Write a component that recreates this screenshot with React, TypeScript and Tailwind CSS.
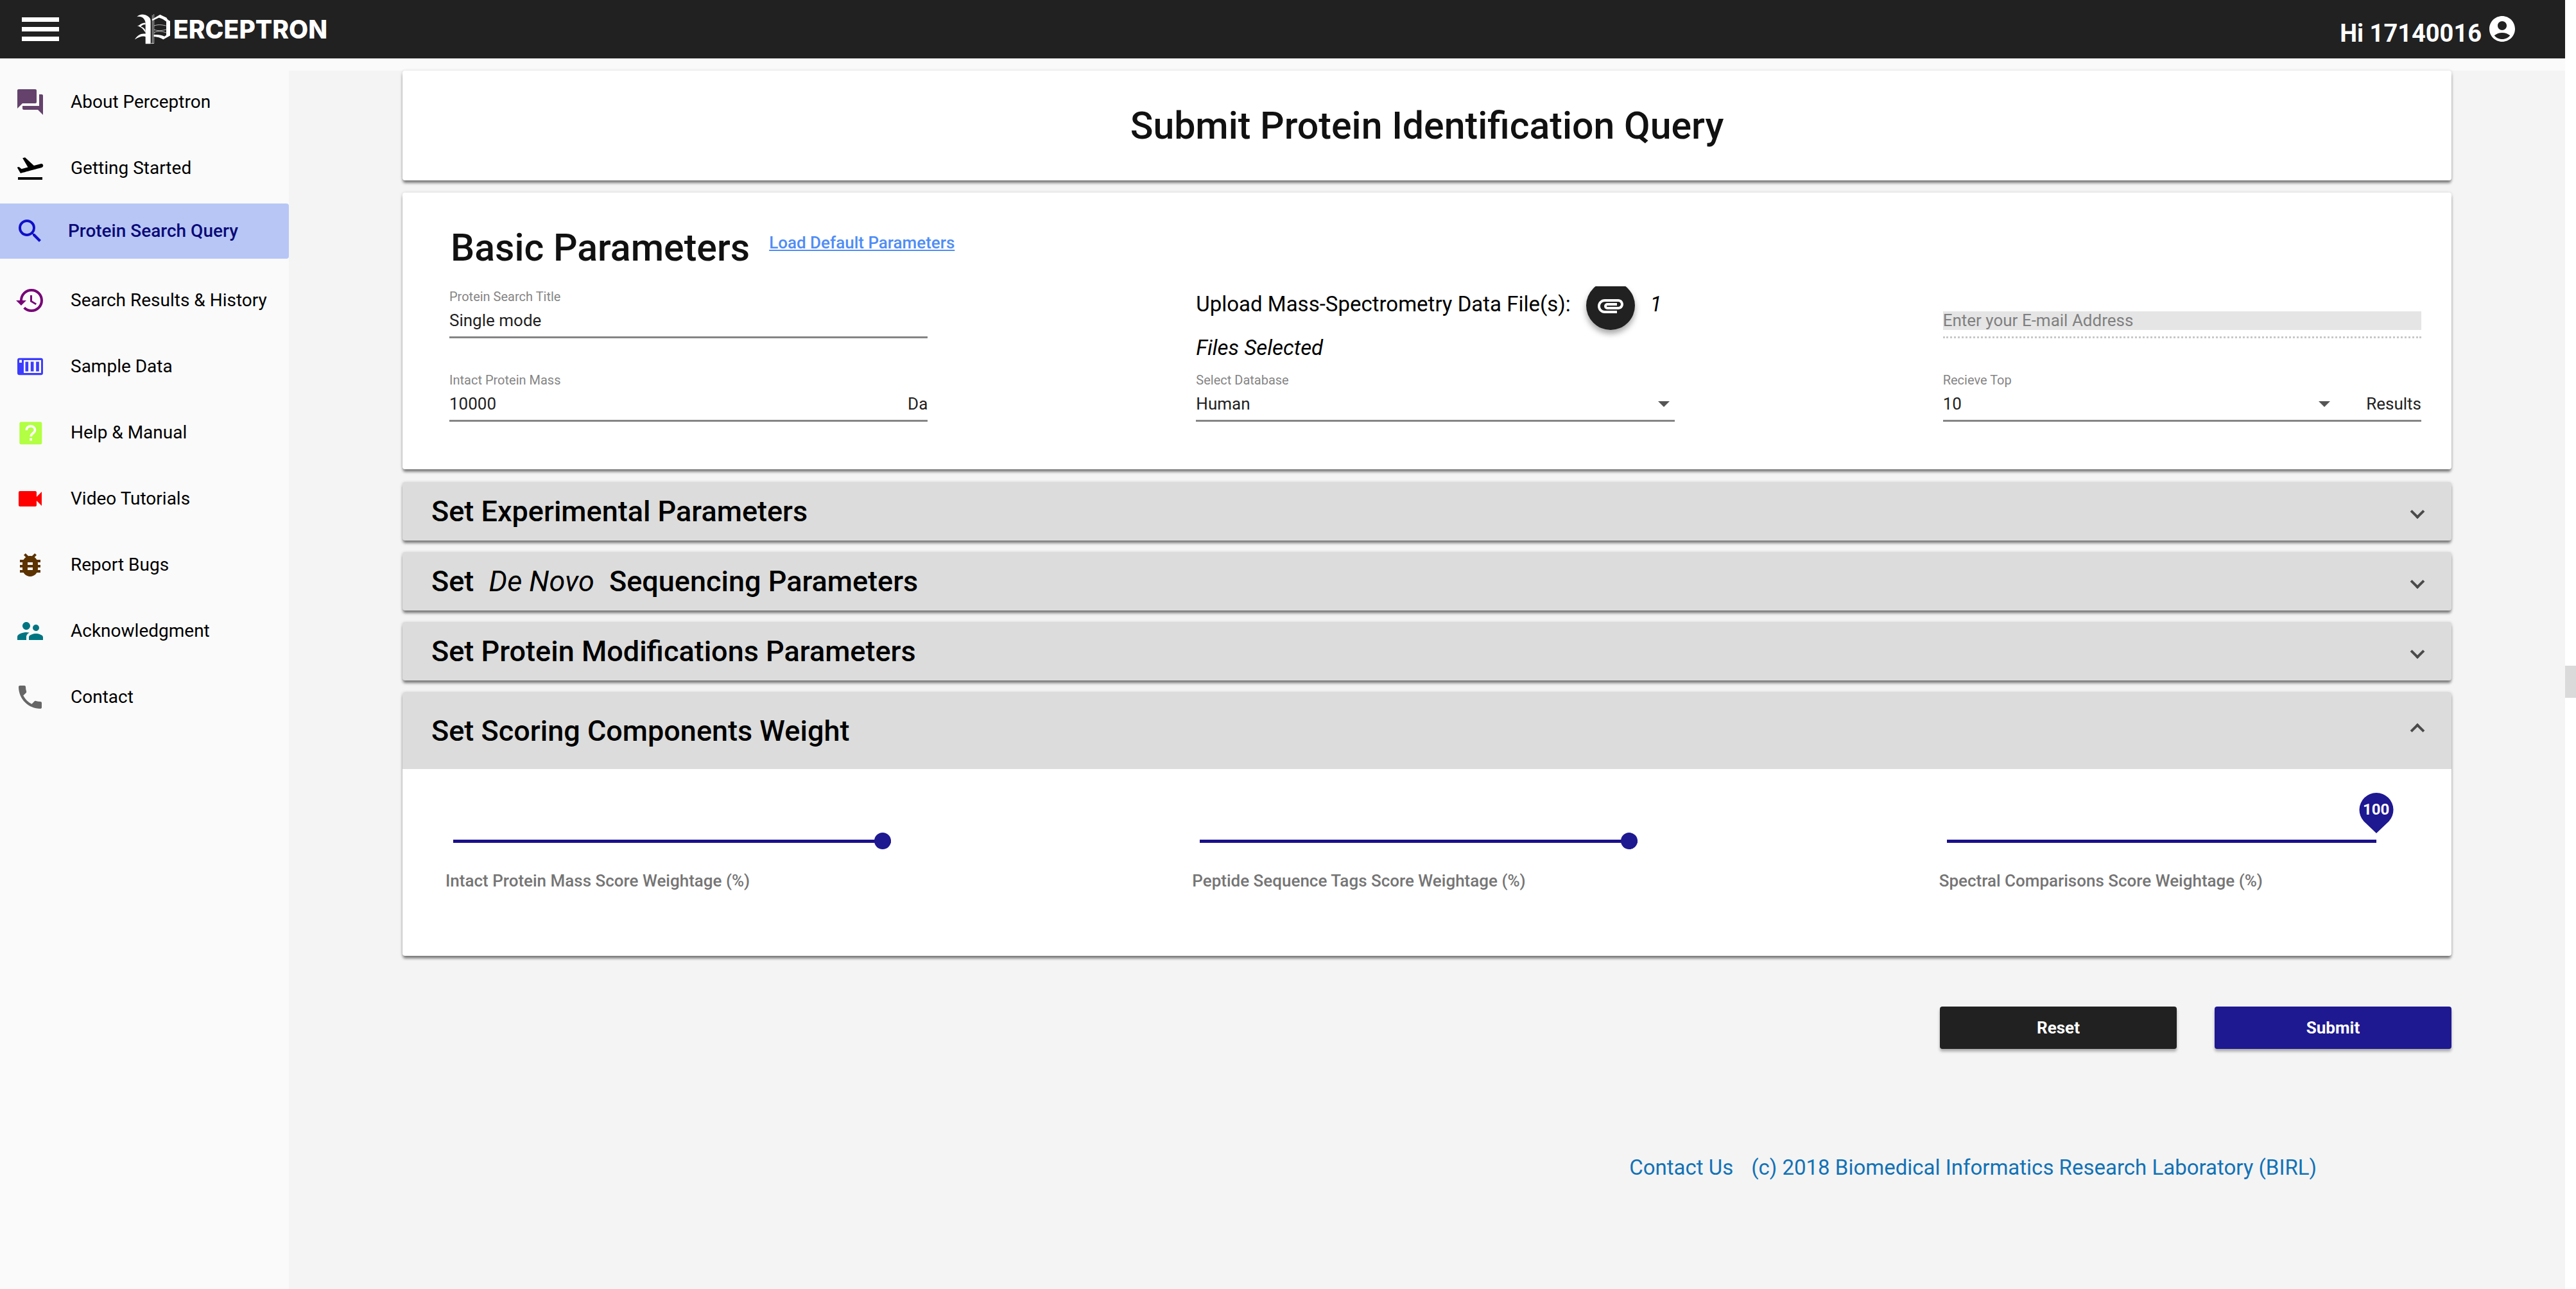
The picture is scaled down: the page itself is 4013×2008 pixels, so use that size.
import React from "react";
import {
  MdForum,
  MdFlightTakeoff,
  MdSearch,
  MdHistory,
  MdVideocam,
  MdBugReport,
  MdSupervisorAccount,
  MdPhone,
  MdAccountCircle,
  MdAttachment,
} from "react-icons/md";

function SampleDataIcon({ className }: { className?: string }) {
  return (
    <svg viewBox="0 0 24 24" className={className} fill="currentColor" aria-hidden="true">
      <path
        fillRule="evenodd"
        d="M2 4h20a2 2 0 0 1 2 2v12a2 2 0 0 1-2 2H2a2 2 0 0 1-2-2V6a2 2 0 0 1 2-2zM1.800 5.800v2.600h2.400V5.800zM6 6v12h16.200V6z"
      />
      <path d="M7.500 7.500h2.800v9H7.500zM12.500 7.500h2.800v9h-2.800zM17.500 7.500h2.800v9h-2.800z" />
    </svg>
  );
}

function HelpIcon({ className }: { className?: string }) {
  return (
    <svg viewBox="0 0 24 24" className={className} aria-hidden="true">
      <rect x="2" y="2" width="21" height="21" rx="1.500" fill="currentColor" />
      <path
        d="M8.500 9.800c0-2.400 1.700-3.900 4-3.900s4 1.500 4 3.700c0 2.800-3.800 3-3.800 6"
        fill="none"
        stroke="#fff"
        strokeWidth="2.200"
      />
      <rect x="11.500" y="17.200" width="2.300" height="2.300" fill="#fff" />
    </svg>
  );
}

type NavItem = { label: string; icon: React.ReactNode; active?: boolean };

const NAV: NavItem[] = [
  { label: "About Perceptron", icon: <MdForum className="size-12 text-[#64426c]" /> },
  { label: "Getting Started", icon: <MdFlightTakeoff className="size-12 text-black" /> },
  { label: "Protein Search Query", icon: <MdSearch className="size-12 text-[#1010c8]" />, active: true },
  { label: "Search Results & History", icon: <MdHistory className="size-12 text-[#760076]" /> },
  { label: "Sample Data", icon: <SampleDataIcon className="size-10 text-[#3c3cff]" /> },
  { label: "Help & Manual", icon: <HelpIcon className="size-10 text-[#b2ff43]" /> },
  { label: "Video Tutorials", icon: <MdVideocam className="size-12 text-[#ff0000]" /> },
  { label: "Report Bugs", icon: <MdBugReport className="size-12 text-[#5c3200]" /> },
  { label: "Acknowledgment", icon: <MdSupervisorAccount className="size-12 text-[#007582]" /> },
  { label: "Contact", icon: <MdPhone className="size-12 text-[#666666]" /> },
];

function Logo() {
  return (
    <a href="#" aria-label="Perceptron" className="flex items-center text-white">
      <svg viewBox="0 0 180 140" className="h-[47px] w-[60px]" fill="currentColor" aria-hidden="true">
        <path d="M10 12C22-2 46-2 62 10c8 5 12 12 12 22v106H50V40C48 20 30 6 10 12z" />
        <path d="M10 54c12 2 16-14 40-14v8c-16 0-18 6-22 10 10 2 18 8 22 18v10C40 70 30 58 10 54z" />
        <path d="M0 118c14-22 30-30 52-26v14c-10-6-28-4-52 12z" />
        <path d="M80 24 118 2l30 14c4 8 8 12 17 16v68l-32 18c-12-8-28-12-46-14l2-8c18-2 36 0 50 8l8-6V34c-12-10-24-14-34-18L82 30z" />
        <path
          d="M82 4v134M89 0v136M74 136h16M90 54c14-6 34-6 56 0M90 72c14 6 34 6 56 0M90 86c14-8 34-8 56 0"
          fill="none"
          stroke="currentColor"
          strokeWidth="3"
          opacity="0.7"
        />
      </svg>
      <span className="font-[Inter] text-[39px] leading-none font-extrabold">ERCEPTRON</span>
    </a>
  );
}

const card =
  "rounded-[4px] bg-white shadow-[0_5px_4px_-1px_rgba(0,0,0,0.45),0_1px_5px_rgba(0,0,0,0.2)]";

function Caret() {
  return (
    <svg viewBox="0 0 18 9" className="pointer-events-none h-[9px] w-[18px] fill-[#555]" aria-hidden="true">
      <path d="M0 0h18l-9 9z" />
    </svg>
  );
}

function Field({
  id,
  label,
  line = "border-b-[3px] border-[#858585]",
  children,
}: {
  id: string;
  label: string;
  line?: string;
  children: React.ReactNode;
}) {
  return (
    <div className={"flex flex-col " + line}>
      <label htmlFor={id} className="h-7 pt-1 text-xl leading-6 text-[#858585]">
        {label}
      </label>
      <div className="my-2 flex h-[34px] items-center text-[26px] text-[#222]">{children}</div>
    </div>
  );
}

function Panel({ children }: { children: React.ReactNode }) {
  return (
    <button
      type="button"
      aria-expanded="false"
      className="flex h-[91px] w-full items-center justify-between rounded-[4px] bg-[#dcdcdc] px-[45px] text-left shadow-[0_5px_4px_-1px_rgba(0,0,0,0.45),0_1px_5px_rgba(0,0,0,0.2)]"
    >
      <h3 className="text-[45px] leading-none font-medium text-black">{children}</h3>
      <span className="size-4 rotate-45 border-r-4 border-b-4 border-[#4a4a4a]" />
    </button>
  );
}

function WeightSlider({ id, label, pin }: { id: string; label: string; pin?: boolean }) {
  return (
    <div className="flex flex-col">
      <div className="relative ml-3 h-7 w-[682px]">
        <input
          id={id}
          type="range"
          min={0}
          max={100}
          defaultValue={100}
          className={
            pin
              ? "absolute inset-0 h-7 w-[669px] appearance-none bg-[linear-gradient(#1a0f8a,#1a0f8a)] bg-[length:100%_5px] bg-center bg-no-repeat [&::-webkit-slider-thumb]:size-0 [&::-webkit-slider-thumb]:appearance-none"
              : "absolute inset-0 h-7 w-full appearance-none bg-[linear-gradient(#1a0f8a,#1a0f8a)] bg-[length:100%_5px] bg-center bg-no-repeat [&::-webkit-slider-thumb]:size-[26px] [&::-webkit-slider-thumb]:appearance-none [&::-webkit-slider-thumb]:rounded-full [&::-webkit-slider-thumb]:bg-[#1e1891]"
          }
        />
        {pin && (
          <output htmlFor={id} className="absolute right-[-14px] bottom-[26px] flex h-[63px] w-[54px] justify-center">
            <svg viewBox="0 0 54 63" className="absolute inset-0 fill-[#1e1891]" aria-hidden="true">
              <path d="M27 63 7.500 44.500A26.500 26.500 0 1 1 46.500 44.500z" />
            </svg>
            <span className="relative mt-3 text-2xl leading-7 font-bold text-white">100</span>
          </output>
        )}
      </div>
      <label htmlFor={id} className="mt-8 text-[26px] leading-8 font-medium text-[#757575]">
        {label}
      </label>
    </div>
  );
}

export default function App() {
  return (
    <div className="flex min-h-screen bg-[#fafafa] font-[Roboto,sans-serif] text-black">
      <div className="flex min-w-0 flex-1 flex-col">
        <header className="flex h-[91px] items-center justify-between bg-[#212121] pr-[74px] pl-[34px]">
          <div className="flex items-center gap-[118px]">
            <button type="button" aria-label="Toggle menu" className="flex w-[58px] flex-col gap-2">
              <span className="h-[7px] bg-white" />
              <span className="h-[7px] bg-white" />
              <span className="h-[7px] bg-white" />
            </button>
            <Logo />
          </div>
          <a href="#" className="flex items-start gap-2 text-white">
            <span className="pt-3 text-[38px] leading-none font-bold">Hi 17140016</span>
            <MdAccountCircle className="size-12" />
          </a>
        </header>

        <div className="flex flex-1">
          <nav className="w-[450px] shrink-0 pt-4">
            <ul>
              {NAV.map((item) => (
                <li key={item.label} className={item.active ? "h-[103px] pt-1" : "flex h-[103px] items-center"}>
                  <a
                    href="#"
                    className={
                      item.active
                        ? "flex h-[86px] w-full items-center gap-[35px] rounded-r bg-[#b8c6f6] pl-[23px] text-[28px] font-medium text-[#0a0a78]"
                        : "flex h-[86px] w-full items-center gap-[39px] pl-[23px] text-[28px] text-black"
                    }
                  >
                    <span className="flex size-12 items-center justify-center">{item.icon}</span>
                    {item.label}
                  </a>
                </li>
              ))}
            </ul>
          </nav>

          <main className="mt-[19px] flex min-w-0 flex-1 flex-col bg-[#f4f4f4] px-[177px]">
            <section className={card + " flex h-[171px] items-center justify-center"}>
              <h1 className="text-[59px] leading-none font-medium text-[#111]">
                Submit Protein Identification Query
              </h1>
            </section>

            <section className={card + " mt-[19px] pt-[50px] pr-[47px] pb-[74px] pl-[73px]"}>
              <div className="flex items-start gap-[30px] pl-0.5">
                <h2 className="text-[59px] leading-[72px] font-medium text-[#111]">Basic Parameters</h2>
                <a href="#" className="pt-3 text-[26px] leading-8 font-medium text-[#4f8cf6] underline">
                  Load Default Parameters
                </a>
              </div>
              <div className="mt-6 grid grid-cols-3 gap-x-[418px]">
                <div className="flex flex-col gap-[49px]">
                  <Field id="title" label="Protein Search Title">
                    <input id="title" defaultValue="Single mode" className="w-full min-w-0" />
                  </Field>
                  <Field id="mass" label="Intact Protein Mass">
                    <input id="mass" defaultValue="10000" className="w-full min-w-0" />
                    <span>Da</span>
                  </Field>
                </div>

                <div className="flex flex-col justify-between">
                  <div className="flex flex-col">
                    <div className="flex h-[68px] items-start">
                      <span className="pt-1 text-[33px] leading-[48px]">Upload Mass-Spectrometry Data File(s):</span>
                      <div className="h-[92px] overflow-hidden px-6">
                        <button
                          type="button"
                          aria-label="Attach files"
                          className="-mt-2 flex size-[76px] items-center justify-center rounded-full bg-[#212121] text-white shadow-[0_6px_10px_rgba(0,0,0,0.35)]"
                        >
                          <MdAttachment className="size-12" />
                        </button>
                      </div>
                      <i className="pt-1 text-[33px] leading-[48px]">1</i>
                    </div>
                    <i className="pt-1 text-[33px] leading-[48px]">Files Selected</i>
                  </div>
                  <Field id="database" label="Select Database">
                    <select id="database" className="w-full appearance-none">
                      <option>Human</option>
                    </select>
                    <span className="pr-2">
                      <Caret />
                    </span>
                  </Field>
                </div>

                <div className="flex flex-col gap-[49px]">
                  <Field id="email" label="" line="border-b-[3px] border-dotted border-[#c8c8c8]">
                    <input
                      id="email"
                      type="email"
                      disabled
                      aria-label="Enter your E-mail Address"
                      placeholder="Enter your E-mail Address"
                      className="h-[29px] w-full bg-[#e5e5e5] placeholder:text-[#808080]"
                    />
                  </Field>
                  <Field id="top" label="Recieve Top">
                    <select id="top" className="min-w-0 flex-1 appearance-none">
                      <option>10</option>
                    </select>
                    <Caret />
                    <span className="pl-14">Results</span>
                  </Field>
                </div>
              </div>
            </section>

            <div className="mt-5 flex flex-col gap-[18px]">
              <Panel>Set Experimental Parameters</Panel>
              <Panel>
                Set <i className="mx-3 font-normal">De Novo</i> Sequencing Parameters
              </Panel>
              <Panel>Set Protein Modifications Parameters</Panel>
              <section className={card}>
                <button
                  type="button"
                  aria-expanded="true"
                  className="flex h-[120px] w-full items-center justify-between rounded-t-[4px] bg-[#dcdcdc] px-[45px] text-left"
                >
                  <h3 className="text-[45px] leading-none font-medium text-black">Set Scoring Components Weight</h3>
                  <span className="size-4 rotate-45 border-t-4 border-l-4 border-[#4a4a4a]" />
                </button>
                <div className="grid grid-cols-3 gap-x-[418px] pt-[98px] pr-[53px] pb-[101px] pl-[67px]">
                  <WeightSlider id="w-mass" label="Intact Protein Mass Score Weightage (%)" />
                  <WeightSlider id="w-tags" label="Peptide Sequence Tags Score Weightage (%)" />
                  <WeightSlider id="w-spec" label="Spectral Comparisons Score Weightage (%)" pin />
                </div>
              </section>
            </div>

            <div className="mt-[79px] flex justify-end gap-[59px]">
              <button
                type="button"
                className="h-[66px] w-[369px] rounded-[4px] bg-[#212121] text-[26px] font-bold text-white shadow-[0_4px_4px_rgba(0,0,0,0.3)]"
              >
                Reset
              </button>
              <button
                type="submit"
                className="h-[66px] w-[369px] rounded-[4px] bg-[#1e1891] text-[26px] font-bold text-white shadow-[0_4px_4px_rgba(0,0,0,0.3)]"
              >
                Submit
              </button>
            </div>

            <footer className="mt-40 flex justify-end gap-7 pr-[210px] text-[33px] leading-[50px] text-[#1272b6]">
              <a href="#">Contact Us</a>
              <span>(c) 2018 Biomedical Informatics Research Laboratory (BIRL)</span>
            </footer>
          </main>
        </div>
      </div>
      <div className="w-[17px] shrink-0 bg-white pt-[1037px]" aria-hidden="true">
        <div className="h-[50px] bg-[#dadada]" />
      </div>
    </div>
  );
}
